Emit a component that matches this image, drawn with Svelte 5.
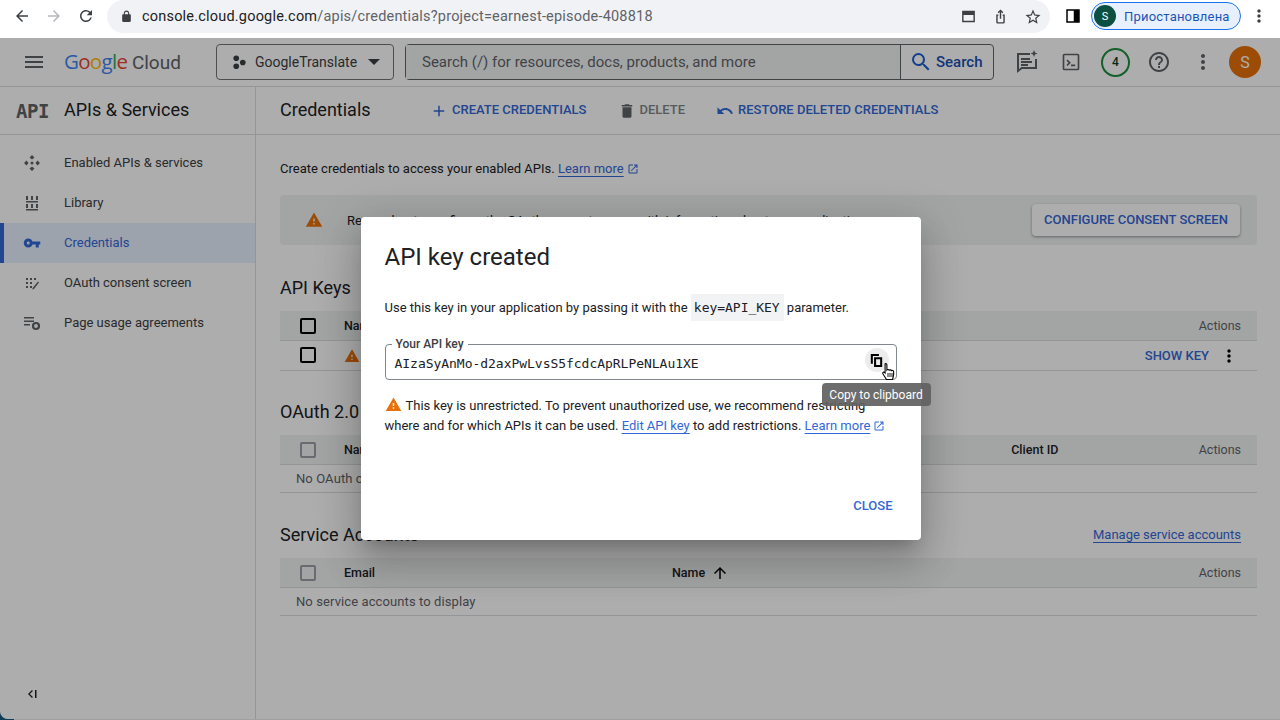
<script>
  const P = {
    menu: 'M3 18h18v-2H3v2zm0-5h18v-2H3v2zm0-7v2h18V6H3z',
    search: 'M15.5 14h-.79l-.28-.27A6.471 6.471 0 0 0 16 9.5 6.5 6.5 0 1 0 9.5 16c1.61 0 3.09-.59 4.23-1.57l.27.28v.79l5 4.99L20.49 19l-4.99-5zm-6 0C7.01 14 5 11.99 5 9.5S7.01 5 9.5 5 14 7.01 14 9.5 11.99 14 9.5 14z',
    del: 'M6 19c0 1.1.9 2 2 2h8c1.1 0 2-.9 2-2V7H6v12zM19 4h-3.5l-1-1h-5l-1 1H5v2h14V4z',
    undo: 'M12.5 8c-2.65 0-5.05.99-6.9 2.6L2 7v9h9l-3.62-3.62c1.39-1.16 3.16-1.88 5.12-1.88 3.54 0 6.55 2.31 7.6 5.5l2.37-.78C21.08 11.03 17.15 8 12.5 8z',
    add: 'M19 13h-6v6h-2v-6H5v-2h6V5h2v6h6v2z',
    warn: 'M1 21h22L12 2 1 21zm12-3h-2v-2h2v2zm0-4h-2v-4h2v4z',
    key: 'M12.65 10A5.99 5.99 0 0 0 7 6c-3.31 0-6 2.69-6 6s2.69 6 6 6a5.99 5.99 0 0 0 5.65-4H17v4h4v-4h2v-4H12.65zM7 14c-1.1 0-2-.9-2-2s.9-2 2-2 2 .9 2 2-.9 2-2 2z',
    help: 'M11 18h2v-2h-2v2zm1-16C6.48 2 2 6.48 2 12s4.48 10 10 10 10-4.48 10-10S17.52 2 12 2zm0 18c-4.41 0-8-3.59-8-8s3.59-8 8-8 8 3.59 8 8-3.59 8-8 8zm0-14c-2.21 0-4 1.79-4 4h2c0-1.1.9-2 2-2s2 .9 2 2c0 2-3 1.75-3 5h2c0-2.25 3-2.5 3-5 0-2.21-1.79-4-4-4z',
    more: 'M12 8c1.1 0 2-.9 2-2s-.9-2-2-2-2 .9-2 2 .9 2 2 2zm0 2c-1.1 0-2 .9-2 2s.9 2 2 2 2-.9 2-2-.9-2-2-2zm0 6c-1.1 0-2 .9-2 2s.9 2 2 2 2-.9 2-2-.9-2-2-2z',
    open: 'M19 19H5V5h7V3H5a2 2 0 0 0-2 2v14a2 2 0 0 0 2 2h14c1.1 0 2-.9 2-2v-7h-2v7zM14 3v2h3.59l-9.83 9.83 1.41 1.41L19 6.41V10h2V3h-7z',
    refresh: 'M17.65 6.35A7.958 7.958 0 0 0 12 4c-4.42 0-7.99 3.58-7.99 8s3.57 8 7.99 8c3.73 0 6.84-2.55 7.73-6h-2.08A5.99 5.99 0 0 1 12 18c-3.31 0-6-2.69-6-6s2.69-6 6-6c1.66 0 3.14.69 4.22 1.78L13 11h7V4l-2.35 2.35z',
    back: 'M20 11H7.83l5.59-5.59L12 4l-8 8 8 8 1.41-1.41L7.83 13H20v-2z',
    forward: 'M12 4l-1.41 1.41L16.17 11H4v2h12.17l-5.58 5.59L12 20l8-8z',
    up: 'M4 12l1.41 1.41L11 7.83V20h2V7.83l5.58 5.59L20 12l-8-8-8 8z',
    star: 'M22 9.24l-7.19-.62L12 2 9.19 8.63 2 9.24l5.46 4.73L5.82 21 12 17.27 18.18 21l-1.63-7.03L22 9.24zM12 15.4l-3.76 2.27 1-4.28-3.32-2.88 4.38-.38L12 6.1l1.71 4.04 4.38.38-3.32 2.88 1 4.28L12 15.4z',
    lock: 'M18 8h-1V6c0-2.76-2.24-5-5-5S7 3.24 7 6v2H6c-1.1 0-2 .9-2 2v10c0 1.1.9 2 2 2h12c1.1 0 2-.9 2-2V10c0-1.1-.9-2-2-2zM9 6c0-1.66 1.34-3 3-3s3 1.34 3 3v2H9V6z',
    tab: 'M3 4h18v16H3V4zm2 6v8h14v-8H5z',
    share: 'M12 2 8 6l1.4 1.4L11 5.8V15h2V5.8l1.6 1.6L16 6l-4-4zM6 9v11a2 2 0 0 0 2 2h8a2 2 0 0 0 2-2V9h-3v2h1v9H8v-9h1V9H6z',
    side: 'M3 3h18v18H3V3zm2 2v14h8V5H5z',
    feedback: 'M3 3h13v2H5v14.2L7.2 17H21V9h2v10H8l-5 4V3zm4 5h9v2H7V8zm0 3h11v2H7v-2zm0 3h7v2H7v-2zM20 0l1 2.5L23.5 3.500 21 4.500 20 7l-1-2.500L16.500 3.500 19 2.500z',
    term: 'M4 2h16a2 2 0 0 1 2 2v16a2 2 0 0 1-2 2H4a2 2 0 0 1-2-2V4a2 2 0 0 1 2-2zm0 2v16h16V4H4zm2.500 6.500 1.400-1.400L11.800 13l-3.900 3.900-1.400-1.400L9 13l-2.500-2.500zM12 15h5v2h-5v-2z'
  };
  const nav = ['Enabled APIs & services', 'Library', 'Credentials', 'OAuth consent screen', 'Page usage agreements'];
</script>

{#snippet ic(d, cls)}
  <svg class={cls} viewBox="0 0 24 24" aria-hidden="true"><path d={d} /></svg>
{/snippet}

{#snippet check(dark)}
  <span class="check" class:dark></span>
{/snippet}

<div class="desktop">
  <header class="chrome">
    <div class="nav-btns">
      {@render ic(P.back, 'c18 dk')}
      {@render ic(P.forward, 'c18 lt')}
      {@render ic(P.refresh, 'c18 dk')}
    </div>
    <div class="omnibox">
      {@render ic(P.lock, 'c12 dk')}
      <span class="url"><b>console.cloud.google.com</b>/apis/credentials?project=earnest-episode-408818</span>
      <span class="omni-icons">
        {@render ic(P.tab, 'c16 dk')}
        {@render ic(P.share, 'c16 dk')}
        {@render ic(P.star, 'c18 dk')}
      </span>
    </div>
    <span class="side-toggle">{@render ic(P.side, 'c18 blk')}</span>
    <div class="profile"><span class="av">S</span><span>Приостановлена</span></div>
    {@render ic(P.more, 'c20 dk')}
  </header>

  <div class="console">
    <div class="topbar">
      {@render ic(P.menu, 'i24 grey')}
      <div class="logo"><span class="b">G</span><span class="r">o</span><span class="y">o</span><span class="b">g</span><span class="g">l</span><span class="r">e</span> <span class="cloud">Cloud</span></div>
      <div class="project">
        <svg class="i16" viewBox="0 0 16 16" aria-hidden="true"><circle cx="4.500" cy="3.500" r="3" /><circle cx="4.500" cy="12" r="3" /><circle cx="11.500" cy="8" r="3" /></svg>
        <span>GoogleTranslate</span>
        <i class="caret"></i>
      </div>
      <div class="searchbar">
        <span class="ph">Search (/) for resources, docs, products, and more</span>
        <span class="sbtn">{@render ic(P.search, 'i24 blue')}Search</span>
      </div>
      <div class="top-icons">
        {@render ic(P.feedback, 'i24 grey')}
        {@render ic(P.term, 'i20 grey')}
        <span class="ring">4</span>
        {@render ic(P.help, 'i24 grey')}
        {@render ic(P.more, 'i24 grey')}
        <span class="avatar">S</span>
      </div>
    </div>

    <div class="body">
      <aside class="side">
        <div class="side-head">
          <span class="api-mark">API</span>
          <span class="side-title">APIs &amp; Services</span>
        </div>
        <nav class="side-nav">
          {#each nav as item, i}
            <div class="nav-item" class:active={i === 2}>
              {#if i === 0}
                <svg class="i18 grey" viewBox="0 0 18 18" aria-hidden="true"><path d="M9 1l2.500 2.500L9 5.500 6.500 3.500zM9 12.500l2.500 2L9 17l-2.500-2.500zM1 9l2.500-2.500 2 2.500-2 2.500zM12.500 9l2-2.500L17 9l-2.500 2.500z" /><circle cx="9" cy="9" r="1.500" /></svg>
              {:else if i === 1}
                <svg class="i18 grey" viewBox="0 0 18 18" aria-hidden="true"><path d="M3 2h2v4H3zM8 2h2v4H8zM13 2h2v4h-2zM3 10h2v4H3zM8 10h2v4H8zM13 10h2v4h-2zM3 7h12v1.500H3zM3 15h12v1.500H3z" /></svg>
              {:else if i === 2}
                {@render ic(P.key, 'i18 blue')}
              {:else if i === 3}
                <svg class="i18 grey" viewBox="0 0 18 18" aria-hidden="true"><path d="M3 4h2v2H3zM7 4h2v2H7zM11 4h2v2h-2zM3 8h2v2H3zM7 8h2v2H7zM3 12h2v2H3zM7 12h2v2H7zM10 13.500l5-6 1 1-5 6.500-2 .5z" /></svg>
              {:else}
                <svg class="i18 grey" viewBox="0 0 18 18" aria-hidden="true"><path d="M1 3h10v1.500H1zM1 6.500h10V8H1zM1 10h6v1.500H1z" /><circle cx="13" cy="12" r="3" fill="none" stroke="currentColor" stroke-width="2.200" /></svg>
              {/if}
              <span class="nav-label">{item}</span>
            </div>
          {/each}
        </nav>
        <div class="collapse">
          <svg class="i12" viewBox="0 0 12 12" aria-hidden="true"><path d="M6 2 2 6l4 4 .9-.9L3.800 6l3.100-3.100zM9 2h1.500v8H9z" /></svg>
        </div>
      </aside>

      <main class="main">
        <div class="actions">
          <h1>Credentials</h1>
          <span class="act blue-t">{@render ic(P.add, 'i18 blue')}<span class="lift">CREATE CREDENTIALS</span></span>
          <span class="act dis">{@render ic(P.del, 'i18 grey')}<span class="lift">DELETE</span></span>
          <span class="act blue-t">{@render ic(P.undo, 'i18 blue')}<span class="lift">RESTORE DELETED CREDENTIALS</span></span>
        </div>
        <div class="content">
          <p class="intro">Create credentials to access your enabled APIs. <a href="#top">Learn more</a>{@render ic(P.open, 'i12 blue')}</p>
          <div class="notice">
            {@render ic(P.warn, 'i18 orange')}
            <span class="notice-text">Remember to configure the OAuth consent screen with information about your application.</span>
            <span class="config"><span class="lift">CONFIGURE CONSENT SCREEN</span></span>
          </div>

          <h2 class="h-api">API Keys</h2>
          <div class="row head">
            <span class="c0">{@render check(true)}</span><span class="c1">Name</span><span class="end">Actions</span>
          </div>
          <div class="row">
            <span class="c0">{@render check(true)}</span>
            <span class="c1">{@render ic(P.warn, 'i16 orange')}</span>
            <span class="show">SHOW KEY</span>
            <span class="vert">{@render ic(P.more, 'i20 blk')}</span>
          </div>

          <h2 class="h-oauth">OAuth 2.0 Client IDs</h2>
          <div class="row head">
            <span class="c0">{@render check(false)}</span><span class="c1">Name</span><span class="client">Client ID</span><span class="end">Actions</span>
          </div>
          <div class="row note"><span>No OAuth clients to display</span></div>

          <div class="sa-title">
            <h2>Service Accounts</h2>
            <a href="#top">Manage service accounts</a>
          </div>
          <div class="row head">
            <span class="c0">{@render check(false)}</span><span class="c1 email">Email</span><span class="namecol">Name {@render ic(P.up, 'i18 blk')}</span><span class="end">Actions</span>
          </div>
          <div class="row note"><span>No service accounts to display</span></div>
        </div>
      </main>
    </div>

    <div class="scrim">
      <div class="modal">
        <h3>API key created</h3>
        <p class="m-body">Use this key in your application by passing it with the <code>key=API_KEY</code> parameter.</p>
        <fieldset>
          <legend>Your API key</legend>
          <span class="keytext">AIzaSyAnMo-d2axPwLvsS5fcdcApRLPeNLAu1XE</span>
          <span class="copy">
            <svg class="i13" viewBox="0 0 16 16" aria-hidden="true"><path d="M1 0h10v2.500H3.500V12H1zM5 4h10v12H5zm2.500 2.500v7h5v-7z" /></svg>
          </span>
        </fieldset>
        <p class="m-warn">
          {@render ic(P.warn, 'i18 w-ic')}This key is unrestricted. To prevent unauthorized use, we recommend restricting where and for which APIs it can be used. <a href="#top">Edit API key</a> to add restrictions. <a href="#top">Learn more</a>{@render ic(P.open, 'i12 blue')}
        </p>
        <div class="m-foot"><span>CLOSE</span></div>
        <svg class="hand" viewBox="0 0 16 20" aria-hidden="true"><path d="M5 1.500c.8 0 1.400.6 1.400 1.400V8c.4-.6 1.900-.6 2.300.2.500-.5 1.800-.4 2.200.4.600-.4 2-.1 2.200 1 .2 1.500.1 3.900-.4 5.400l-.7 2.500H6l-3.500-5.500c-.6-1-.1-1.900.8-1.900.5 0 .9.300 1.300.8V2.900c0-.8-.2-1.400.4-1.400z" fill="#fff" stroke="#000" stroke-width="1.100" /><path d="M7.500 11v4M9.500 11v4M11.500 11v4" stroke="#000" stroke-width=".9" /></svg>
        <div class="tooltip">Copy to clipboard</div>
      </div>
    </div>
  </div>
</div>

<style>
  :global(body) { margin: 0; font-family: Roboto, "Liberation Sans", sans-serif; }
  :global(svg) { fill: currentColor; flex: none; display: block; }
  .desktop { width: 1280px; height: 720px; display: flex; flex-direction: column; overflow: hidden; background: linear-gradient(90deg, #0f3d55 0 14px, #a0a0a0 14px); color: #202124; font-size: 14px; }
  .chrome { height: 38px; flex: none; background: #fff; display: flex; align-items: flex-start; }
  .nav-btns { display: flex; gap: 14px; padding: 7px 0 0 13px; width: 107px; box-sizing: border-box; }
  .omnibox { width: 943px; height: 33px; background: #f0f2f5; border-radius: 17px; display: flex; align-items: center; padding-left: 13px; box-sizing: border-box; }
  .url { margin-left: 9px; font-size: 14.5px; color: #5f6368; letter-spacing: .2px; }
  .url b { font-weight: 400; color: #202124; }
  .omni-icons { margin-left: auto; display: flex; align-items: center; gap: 15px; padding-right: 8px; }
  .side-toggle { margin: 7px 0 0 14px; }
  :global(.c12) { width: 13px; height: 13px; }
  :global(.c16) { width: 17px; height: 17px; }
  :global(.c18) { width: 18px; height: 18px; }
  :global(.c20) { width: 20px; height: 20px; margin: 6px 0 0 8px; }
  :global(.dk) { color: #3c4043; }
  :global(.lt) { color: #b5b8bc; }
  :global(.blk) { color: #000; }
  :global(.grey) { color: #5f6368; }
  :global(.blue) { color: #3367d6; }
  :global(.orange) { color: #e8710a; }
  :global(.i24) { width: 24px; height: 24px; }
  :global(.i20) { width: 20px; height: 20px; }
  :global(.i18) { width: 18px; height: 18px; }
  :global(.i16) { width: 16px; height: 16px; }
  :global(.i13) { width: 13px; height: 13px; }
  :global(.i12) { width: 12px; height: 12px; }
  .profile { margin: 2px 0 0 9px; width: 150px; height: 28px; box-sizing: border-box; border: 1px solid #1a73e8; border-radius: 14px; background: #e8f0fe; color: #1a56b8; display: flex; align-items: center; padding-left: 2px; gap: 8px; font-size: 13px; letter-spacing: .2px; }
  .av { width: 22px; height: 22px; border-radius: 50%; background: #0b5040; color: #fff; font-size: 11px; display: grid; place-items: center; }

  .console { position: relative; height: 681px; flex: none; background: #fff; display: flex; flex-direction: column; border-bottom-left-radius: 8px; overflow: hidden; }
  .topbar { height: 48px; flex: none; border-bottom: 1px solid #dadce0; display: flex; align-items: center; padding-left: 22px; color: #5f6368; }
  .logo { font-family: "Open Sans", sans-serif; font-size: 20.5px; letter-spacing: -.7px; margin: -3px 0 0 18px; width: 152px; white-space: pre; }
  .logo .b { color: #4285f4; } .logo .r { color: #ea4335; } .logo .y { color: #fbbc04; } .logo .g { color: #34a853; }
  .cloud { color: #5f6368; font-family: Roboto, sans-serif; font-size: 19px; letter-spacing: 0; }
  .project { width: 178px; height: 36px; box-sizing: border-box; border: 1px solid #70757a; border-radius: 4px; display: flex; align-items: center; padding-left: 15px; gap: 8px; color: #3c4043; }
  .project .i16 { width: 15px; height: 15px; }
  .caret { width: 0; height: 0; border: 6px solid transparent; border-top: 6px solid #3c4043; border-bottom: 0; margin-left: 3px; }
  .searchbar { margin-left: 11px; width: 589px; height: 36px; box-sizing: border-box; border: 1px solid #5f6368; border-radius: 4px; display: flex; align-items: center; }
  .ph { flex: 1; height: 100%; background: #f1f3f4; display: flex; align-items: center; padding-left: 16px; color: #5f6368; font-size: 15px; border-right: 1px solid #5f6368; }
  .sbtn { width: 92px; display: flex; align-items: center; padding-left: 8px; box-sizing: border-box; gap: 3px; color: #1a4fb4; font-weight: 500; font-size: 15px; }
  .sbtn :global(svg) { color: #1a5fd0; }
  .top-icons { display: flex; align-items: center; margin-left: 20px; }
  .top-icons > :global(svg) { margin-right: 20px; }
  .top-icons > :global(.i24:first-child) { margin-right: 23px; }
  .ring { width: 29px; height: 29px; box-sizing: border-box; border: 2px solid #1e8e3e; border-radius: 50%; display: grid; place-items: center; font-size: 12px; font-weight: 500; color: #0d3b1e; margin-right: 17px; }
  .avatar { width: 32px; height: 32px; border-radius: 50%; background: #e8710a; color: #fff; display: grid; place-items: center; font-size: 16px; margin-left: -6px; }

  .body { flex: 1; display: flex; min-height: 0; }
  .side { width: 256px; box-sizing: border-box; border-right: 1px solid #dadce0; display: flex; flex-direction: column; flex: none; }
  .side-head { height: 48px; flex: none; box-sizing: border-box; border-bottom: 1px solid #dadce0; display: flex; align-items: center; padding-left: 16px; }
  .api-mark { font-family: "DejaVu Sans Mono", monospace; font-weight: 700; font-size: 19px; color: #5f6368; letter-spacing: -.5px; width: 48px; }
  .side-title { font-size: 18px; color: #202124; margin-top: -2px; }
  .side-nav { padding-top: 8px; }
  .nav-item { height: 40px; display: flex; align-items: center; padding-left: 23px; gap: 23px; color: #3c4043; font-size: 13px; }
  .nav-label { margin-top: -2px; }
  .nav-item.active { background: #e8f0fe; color: #3367d6; box-shadow: inset 4px 0 0 #3367d6; }
  .collapse { margin-top: auto; padding: 0 0 19px 26px; color: #202124; }

  .main { flex: 1; min-width: 0; display: flex; flex-direction: column; }
  .actions { height: 48px; flex: none; box-sizing: border-box; border-bottom: 1px solid #dadce0; display: flex; align-items: center; padding-left: 24px; }
  h1 { margin: -2px 41px 0 0; font-size: 18px; font-weight: 400; width: 109px; }
  .act { display: flex; align-items: center; gap: 4px; font-size: 13px; font-weight: 500; margin-right: 32px; white-space: nowrap; }
  .lift { margin-top: -2px; }
  .blue-t { color: #3367d6; }
  .act.dis { color: #80868b; gap: 3px; margin-right: 31px; }
  .content { padding: 0 23px 0 24px; }
  .intro { margin: 24px 0 0; height: 20px; line-height: 20px; font-size: 13px; display: flex; align-items: center; white-space: pre; color: #202124; }
  .intro a, .sa-title a, .m-warn a { color: #3367d6; text-decoration: underline; text-underline-offset: 3px; }
  .intro :global(svg) { margin-left: 3px; }
  .notice { margin-top: 16px; height: 50px; background: #f1f3f4; border-radius: 4px; display: flex; align-items: center; padding: 0 17px 0 25px; font-size: 13px; }
  .notice-text { margin-left: 24px; white-space: nowrap; flex: 1; }
  .config { width: 208px; height: 32px; box-sizing: border-box; background: #fff; border-radius: 4px; box-shadow: 0 1px 3px rgba(0,0,0,.4); color: #3367d6; font-weight: 500; font-size: 13px; display: grid; place-items: center; flex: none; }
  h2 { font-size: 18px; font-weight: 400; margin: 0; line-height: 24px; }
  .h-api { margin-top: 31px; margin-bottom: 11px; }
  .h-oauth { margin-top: 29px; margin-bottom: 11px; }
  .sa-title { display: flex; justify-content: space-between; align-items: center; margin-top: 30px; margin-bottom: 11px; padding-right: 16px; font-size: 13px; }
  .sa-title a { margin-top: -2px; }
  .row { height: 30px; box-sizing: border-box; border-bottom: 1px solid #dadce0; display: flex; align-items: center; font-size: 12.5px; color: #202124; }
  .row.head { background: #f1f3f4; font-weight: 500; }
  .row:not(.head) .c0 { margin-top: -1px; }
  .row.note { height: 28px; padding-left: 16px; color: #5f6368; font-size: 13px; letter-spacing: .1px; }
  .c0 { width: 64px; padding-left: 20px; box-sizing: border-box; flex: none; }
  .check { display: block; width: 16px; height: 16px; box-sizing: border-box; border: 2px solid #9aa0a6; border-radius: 2px; }
  .check.dark { border-color: #000; }
  .end { margin-left: auto; padding-right: 16px; color: #5f6368; font-weight: 400; }
  .client { margin-left: 634px; }
  .email { width: 328px; flex: none; }
  .namecol { display: flex; align-items: center; gap: 6px; }
  .show { margin-left: auto; color: #3367d6; font-weight: 500; font-size: 13px; }
  .vert { padding: 0 18px 0 10px; }

  .scrim { position: absolute; inset: 0; background: rgba(0,0,0,.32); display: flex; align-items: center; justify-content: center; }
  .modal { position: relative; width: 560px; height: 323px; box-sizing: border-box; margin-left: 1px; background: #fff; border-radius: 4px; padding: 24px; box-shadow: 0 11px 15px -7px rgba(0,0,0,.2), 0 24px 38px 3px rgba(0,0,0,.14), 0 9px 46px 8px rgba(0,0,0,.12); display: flex; flex-direction: column; }
  h3 { margin: 0; font-size: 24px; font-weight: 400; line-height: 32px; color: #202124; }
  .m-body { margin: 24px 0 0; font-size: 13px; line-height: 22px; color: #202124; }
  code { font-family: "DejaVu Sans Mono", monospace; font-size: 13px; letter-spacing: -.03px; background: #f1f3f4; padding: 6px 4px 6px 3px; }
  fieldset { margin: 19px 0 0; padding: 4px 7px 0 9px; border: 1px solid #80868b; border-radius: 4px; height: 42px; box-sizing: border-box; display: flex; align-items: center; justify-content: space-between; }
  legend { font-size: 12px; font-weight: 500; padding: 0 4px; margin-left: -3px; line-height: 13px; color: #3c4043; }
  .keytext { font-family: "DejaVu Sans Mono", monospace; font-size: 13px; letter-spacing: -.03px; color: #202124; }
  .copy { width: 24px; height: 24px; border-radius: 50%; background: #ececec; display: grid; place-items: center; color: #000; margin-top: -7px; }
  .m-warn { margin: 16px 0 0; font-size: 13px; line-height: 20px; color: #202124; }
  .m-warn :global(.w-ic) { display: inline-block; vertical-align: -3px; color: #e8710a; margin-right: 4px; width: 17px; height: 17px; }
  .m-warn :global(.i12) { display: inline-block; vertical-align: -2px; margin-left: 3px; }
  .m-foot { margin-top: auto; margin-bottom: 1px; height: 20px; display: flex; justify-content: flex-end; align-items: center; padding-right: 4px; color: #3367d6; font-weight: 500; font-size: 13px; }
  .hand { position: absolute; left: 519px; top: 145px; width: 17px; height: 20px; }
  .tooltip { position: absolute; left: 461px; top: 166px; height: 23px; width: 109px; display: grid; place-items: center; background: rgba(97,97,97,.92); color: #fff; font-size: 12px; border-radius: 4px; }
</style>
